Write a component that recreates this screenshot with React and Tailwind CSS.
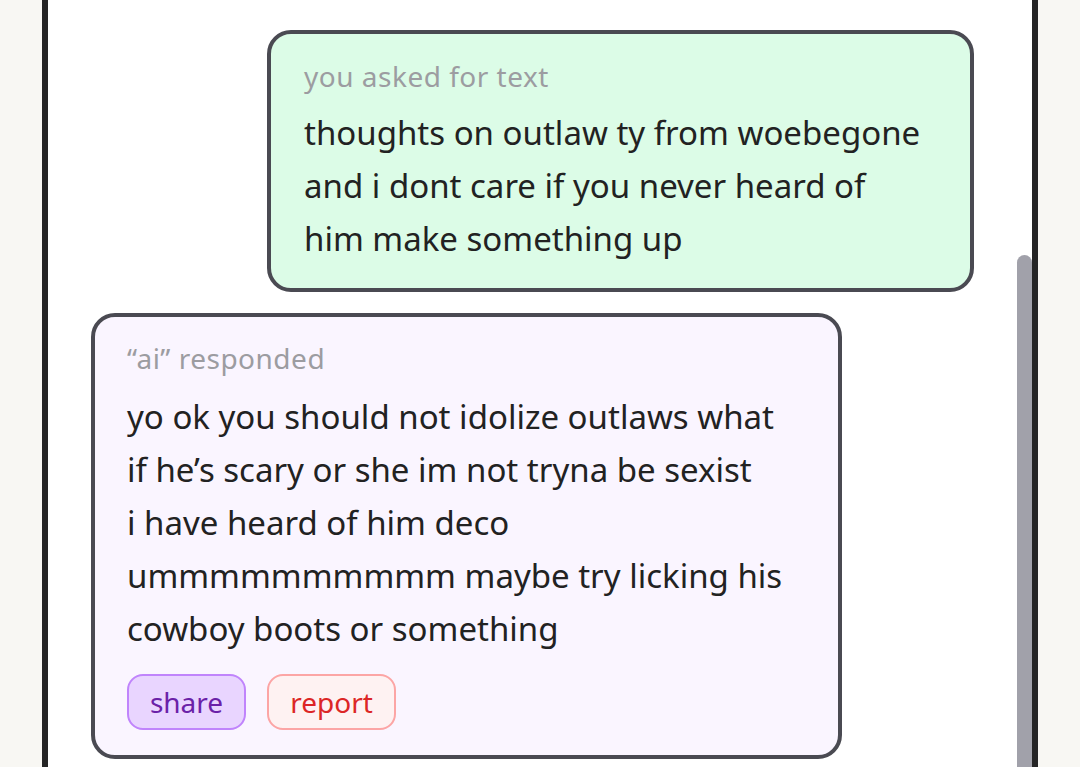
const userLines = [
  'thoughts on outlaw ty from woebegone',
  'and i dont care if you never heard of',
  'him make something up',
];

const aiLines = [
  'yo ok you should not idolize outlaws what',
  'if he\u2019s scary or she im not tryna be sexist',
  'i have heard of him deco',
  'ummmmmmmmmm maybe try licking his',
  'cowboy boots or something',
];

function Lines({ lines, className }) {
  return (
    <div className={`text-[33px] leading-[53px] text-[#222222] ${className}`}>
      {lines.map((line) => (
        <div key={line} className="whitespace-nowrap">
          {line}
        </div>
      ))}
    </div>
  );
}

export default function App() {
  return (
    <div
      className="h-[767px] w-[1080px] overflow-hidden bg-[#f8f7f3] px-[42px]"
      style={{ fontFamily: '"Noto Sans", "DejaVu Sans", sans-serif' }}
    >
      <div className="flex h-full border-x-[6px] border-[#252525] bg-white">
        <div className="flex flex-1 flex-col gap-[21px] px-[43px] pt-[30px]">
          <div className="ml-auto w-[707px] rounded-[24px] border-4 border-[#4a4a52] bg-[#dcfce7] px-[33px] pt-[21px] pb-[23px]">
            <div className="text-[28px] leading-[42px] tracking-[0.5px] text-[#9c9ca1]">
              you asked for text
            </div>
            <Lines lines={userLines} className="mt-[9px]" />
          </div>

          <div className="w-[751px] rounded-[24px] border-4 border-[#4a4a52] bg-[#faf5ff] px-[32px] pt-[20px] pb-[25px]">
            <div className="text-[28px] leading-[42px] tracking-[0.5px] text-[#9c9ca1]">
              {'\u201cai\u201d responded'}
            </div>
            <Lines lines={aiLines} className="mt-[11px]" />
            <div className="mt-[19px] flex gap-[21px]">
              <button
                type="button"
                className="h-[56px] w-[119px] rounded-[16px] border-2 border-[#c084fc] bg-[#e9d5ff] text-[28px] text-[#6b21a8]"
              >
                share
              </button>
              <button
                type="button"
                className="h-[56px] w-[129px] rounded-[16px] border-2 border-[#fca5a5] bg-[#fef2f2] text-[28px] text-[#dc2626]"
              >
                report
              </button>
            </div>
          </div>
        </div>

        <div className="w-[15px] shrink-0 pt-[255px]">
          <div className="h-full rounded-t-full bg-[#a1a1aa]" />
        </div>
      </div>
    </div>
  );
}
